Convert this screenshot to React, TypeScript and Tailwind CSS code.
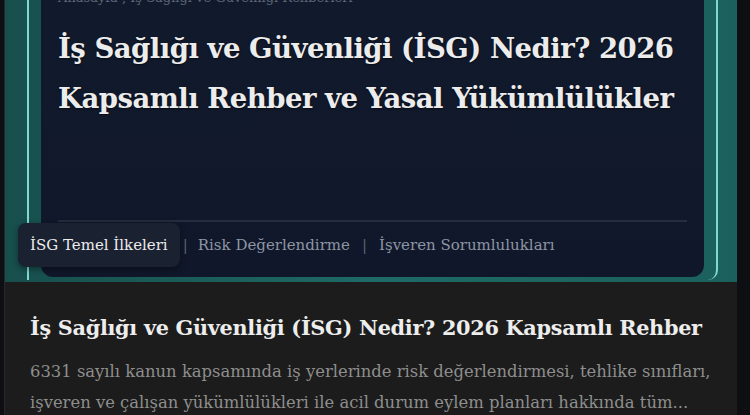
import React from "react";

const slab = { fontFamily: '"DejaVu Serif", "Liberation Serif", serif' };

export default function App() {
  return (
    <div className="w-[750px] h-[415px] overflow-hidden bg-[#0d0f12] flex" style={slab}>
      <div className="w-[733px] ml-[4px] flex flex-col bg-[#1c1c1c] border-l border-[#272727]">
        <div className="relative h-[282px] shrink-0 bg-gradient-to-r from-[#174f4d] via-[#1e6a66] to-[#1b605c] pl-[36px] pr-[33px]">
          <div className="absolute left-[22px] right-[19px] top-0 bottom-[2px] border-l-2 border-r-2 border-b-0 border-[#7fd9cf] rounded-br-[10px] pointer-events-none" />
          <div className="relative h-[277px] rounded-b-[12px] bg-gradient-to-b from-[#111a2c] to-[#10172a] px-[17px] flex flex-col">
            <div className="mt-[-12px] h-[16px] text-[13px] text-[#5d6678] whitespace-nowrap">Anasayfa , İş Sağlığı ve Güvenliği Rehberleri</div>
            <h1 className="mt-[19px] text-[27.5px] leading-[50px] font-bold text-[#ececec] tracking-[-0.5px] [text-shadow:0_1px_2px_rgba(0,0,0,0.6)]">
              <div className="whitespace-nowrap">İş Sağlığı ve Güvenliği (İSG) Nedir? 2026</div>
              <div className="whitespace-nowrap">Kapsamlı Rehber ve Yasal Yükümlülükler</div>
            </h1>
            <div className="mt-auto mb-[55px] h-[2px] bg-[#252d3d]" />
          </div>
          <div className="absolute left-[13px] top-[223px] flex items-center text-[15px]">
            <div className="h-[44px] px-[12px] flex items-center rounded-[8px] bg-[#1a2131] text-[#ececec] shadow-[0_2px_6px_rgba(0,0,0,0.4)]">İSG Temel İlkeleri</div>
            <span className="ml-[3px] mr-[10px] text-[#5a6373]">|</span>
            <span className="text-[#8d95a3]">Risk Değerlendirme</span>
            <span className="mx-[12px] text-[#5a6373]">|</span>
            <span className="text-[#8d95a3]">İşveren Sorumlulukları</span>
          </div>
        </div>
        <div className="pl-[25px] pt-[30px]">
          <h2 className="text-[20.8px] font-bold text-[#ededed] whitespace-nowrap tracking-[-0.3px]">İş Sağlığı ve Güvenliği (İSG) Nedir? 2026 Kapsamlı Rehber</h2>
          <p className="mt-[13px] text-[16.4px] leading-[31px] text-[#8e8e8e]">
            <span className="block whitespace-nowrap">6331 sayılı kanun kapsamında iş yerlerinde risk değerlendirmesi, tehlike sınıfları,</span>
            <span className="block whitespace-nowrap">işveren ve çalışan yükümlülükleri ile acil durum eylem planları hakkında tüm...</span>
          </p>
        </div>
      </div>
    </div>
  );
}
